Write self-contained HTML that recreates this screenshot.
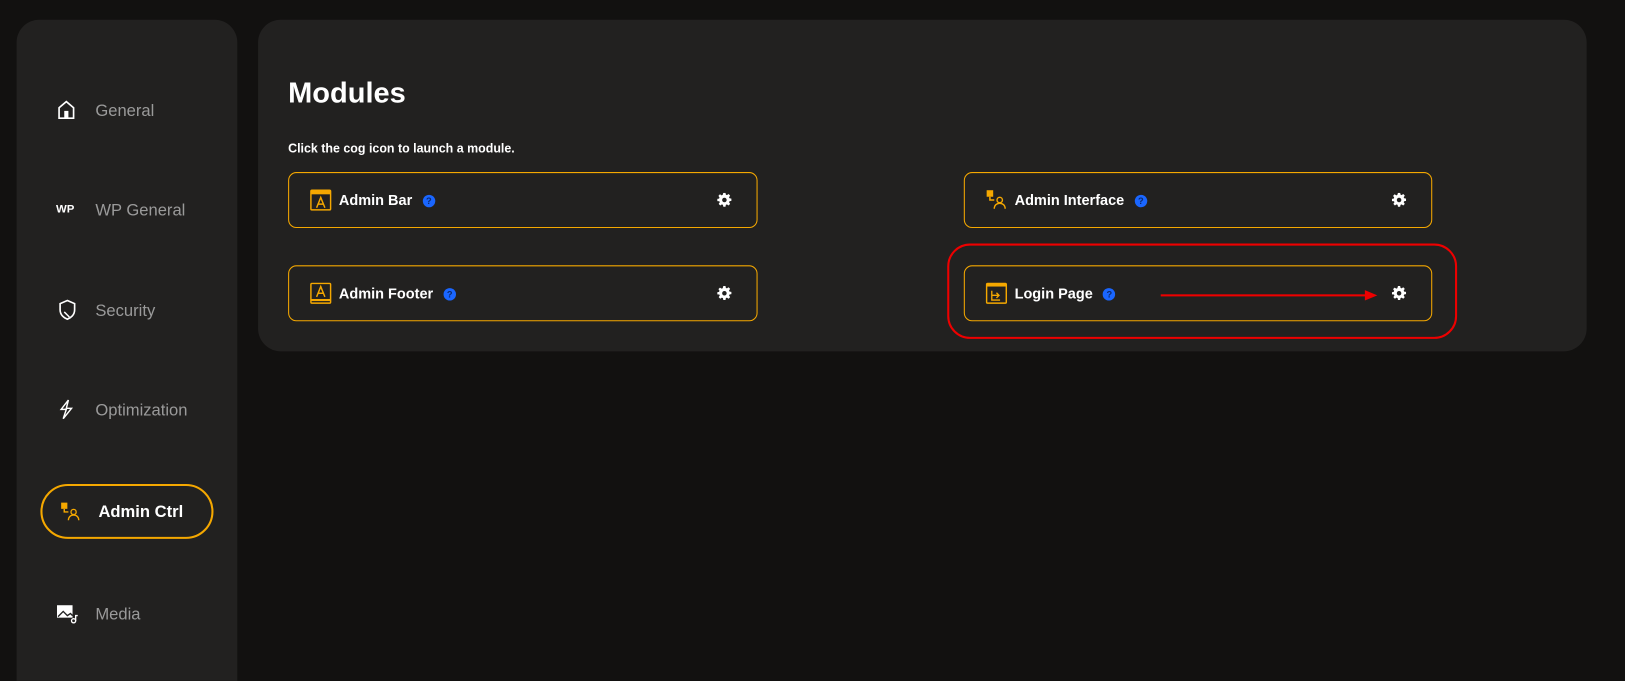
<!DOCTYPE html>
<html style="overflow:hidden;height:681px"><head><meta charset="utf-8"><style>
*{box-sizing:border-box;margin:0;padding:0}
body{width:1625px;height:681px;background:#121110;font-family:"Liberation Sans",sans-serif;position:relative;overflow:hidden}
#w{position:absolute;left:0;top:0;width:1568px;height:657px;overflow:hidden;transform:scale(1.03635);transform-origin:0 0}
.side{position:absolute;left:16px;top:19px;width:213px;height:638px;background:#222120;border-radius:22px 22px 0 0}
.item{position:absolute;left:76px;color:#9a9a9a;font-size:16px;transform:translateY(-50%)}
.ico{position:absolute;left:38px;transform:translateY(-50%)}
.main{position:absolute;left:249px;top:19px;width:1282px;height:320px;background:#222120;border-radius:22px}
h1{position:absolute;left:278px;top:74px;color:#fff;font-size:28px;font-weight:bold}
.sub{position:absolute;left:278px;top:136px;color:#fff;font-size:12px;font-weight:bold}
.card{position:absolute;height:54px;border:1px solid #f5a800;border-radius:8px}
.card .t{position:absolute;left:48px;top:50%;transform:translateY(-50%);color:#fff;font-weight:bold;font-size:14px;white-space:nowrap}
.q{display:inline-block;width:12px;height:12px;border-radius:50%;background:#1a66ff;color:#0a2a70;font-size:9px;text-align:center;line-height:12px;margin-left:10px;vertical-align:1px}
.cog{position:absolute;right:24px;top:50%;transform:translateY(-50%)}
.ci{position:absolute;left:20px;top:50%;transform:translateY(-50%)}
</style></head><body><div id="w">
<div class="side"></div>
<svg class="ico" style="left:54px;top:106px" width="20" height="20" viewBox="0 0 20 20"><path d="M3 18V8l7-6 7 6v10H3z" fill="none" stroke="#fff" stroke-width="1.6"/><rect x="8" y="11" width="4" height="7" fill="#fff"/></svg>
<div class="item" style="left:92px;top:108px">General</div>
<div class="ico" style="left:54px;top:202px;color:#fff;font-size:11px;font-weight:bold">WP</div>
<div class="item" style="left:92px;top:204px">WP General</div>
<svg class="ico" style="left:56px;top:299px" width="18" height="20" viewBox="0 0 18 20"><path d="M9 1l7 3v6c0 5-4 8-7 9-3-1-7-4-7-9V4z" fill="none" stroke="#fff" stroke-width="1.6"/><path d="M6 12l5 5" stroke="#fff" stroke-width="1.4"/></svg>
<div class="item" style="left:92px;top:301px">Security</div>
<svg class="ico" style="left:56px;top:395px" width="16" height="20" viewBox="0 0 16 20"><path d="M10 1L3 10h5l-3 9 8-10H8z" fill="none" stroke="#fff" stroke-width="1.4"/></svg>
<div class="item" style="left:92px;top:397px">Optimization</div>
<div style="position:absolute;left:39px;top:467px;width:167px;height:53px;border:2px solid #f5a800;border-radius:27px"></div>
<svg class="ico" style="left:58px;top:494px" width="20" height="20" viewBox="0 0 20 20"><rect x="1" y="1" width="6" height="6" fill="#f5a800"/><path d="M4 7v3h4" fill="none" stroke="#f5a800" stroke-width="1.4"/><circle cx="13" cy="10" r="2.5" fill="none" stroke="#f5a800" stroke-width="1.3"/><path d="M8 18c0-3 2-5 5-5s5 2 5 5" fill="none" stroke="#f5a800" stroke-width="1.3"/></svg>
<div class="item" style="left:95px;top:495px;color:#fff;font-weight:bold">Admin Ctrl</div>
<svg class="ico" style="left:54px;top:592px" width="22" height="20" viewBox="0 0 22 20"><rect x="1" y="2" width="15" height="12" fill="#fff"/><path d="M2 13l5-5 4 4 3-2 2 2" fill="none" stroke="#222" stroke-width="1.3"/><circle cx="17" cy="17" r="2" fill="none" stroke="#fff" stroke-width="1.3"/><path d="M19 17v-5h2" fill="none" stroke="#fff" stroke-width="1.3"/></svg>
<div class="item" style="left:92px;top:594px">Media</div>

<div class="main"></div>
<h1>Modules</h1>
<div class="sub">Click the cog icon to launch a module.</div>

<svg width="0" height="0" style="position:absolute"><defs><symbol id="cog" viewBox="0 0 16 16"><path fill="#fff" d="M6.8 0h2.4l.4 2.1 1.2.5 1.8-1.2 1.7 1.7-1.2 1.8.5 1.2 2.1.4v2.4l-2.1.4-.5 1.2 1.2 1.8-1.7 1.7-1.8-1.2-1.2.5-.4 2.1H6.8l-.4-2.1-1.2-.5-1.8 1.2-1.7-1.7 1.2-1.8-.5-1.2L0 9.2V6.8l2.1-.4.5-1.2-1.2-1.8 1.7-1.7 1.8 1.2 1.2-.5zM8 5.5a2.5 2.5 0 100 5 2.5 2.5 0 000-5z"/></symbol></defs></svg>

<div class="card" style="left:278px;top:166px;width:453px">
<svg class="ci" width="21" height="21" viewBox="0 0 21 21"><rect x="1" y="1" width="19" height="19" rx="1" fill="none" stroke="#f5a800" stroke-width="1.4"/><rect x="1" y="1" width="19" height="4" fill="#f5a800"/><path d="M6.5 18l4-10 4 10M8 14.5h5" fill="none" stroke="#f5a800" stroke-width="1.4"/></svg>
<div class="t">Admin Bar<span class="q">?</span></div><svg class="cog" width="14" height="14"><use href="#cog"/></svg></div>
<div class="card" style="left:278px;top:256px;width:453px">
<svg class="ci" width="21" height="21" viewBox="0 0 21 21"><rect x="1" y="1" width="19" height="19" rx="1" fill="none" stroke="#f5a800" stroke-width="1.4"/><rect x="1" y="16" width="19" height="2" fill="#f5a800"/><path d="M6.5 14l4-10 4 10M8 10.5h5" fill="none" stroke="#f5a800" stroke-width="1.4"/></svg>
<div class="t">Admin Footer<span class="q">?</span></div><svg class="cog" width="14" height="14"><use href="#cog"/></svg></div>
<div class="card" style="left:930px;top:166px;width:452px">
<svg class="ci" width="21" height="21" viewBox="0 0 20 20"><rect x="1" y="1" width="6" height="6" fill="#f5a800"/><path d="M4 7v3h4" fill="none" stroke="#f5a800" stroke-width="1.4"/><circle cx="13" cy="10" r="2.5" fill="none" stroke="#f5a800" stroke-width="1.3"/><path d="M8 18c0-3 2-5 5-5s5 2 5 5" fill="none" stroke="#f5a800" stroke-width="1.3"/></svg>
<div class="t">Admin Interface<span class="q">?</span></div><svg class="cog" width="14" height="14"><use href="#cog"/></svg></div>
<div class="card" style="left:930px;top:256px;width:452px">
<svg class="ci" width="21" height="21" viewBox="0 0 21 21"><rect x="1" y="1" width="19" height="19" rx="1" fill="none" stroke="#f5a800" stroke-width="1.4"/><rect x="1" y="1" width="19" height="3" fill="#f5a800"/><path d="M6 8v9h8M6 12.5h7M10.5 10l2.5 2.5-2.5 2.5" fill="none" stroke="#f5a800" stroke-width="1.3"/></svg>
<div class="t">Login Page<span class="q">?</span></div><svg class="cog" width="14" height="14"><use href="#cog"/></svg></div>

<div style="position:absolute;left:914px;top:235px;width:492px;height:92px;border:2px solid #e00;border-radius:22px"></div>
<div style="position:absolute;left:1120px;top:284px;width:198px;height:2px;background:#e00"></div>
<div style="position:absolute;left:1317px;top:280px;border-left:12px solid #e00;border-top:5px solid transparent;border-bottom:5px solid transparent"></div>
</div></body></html>
